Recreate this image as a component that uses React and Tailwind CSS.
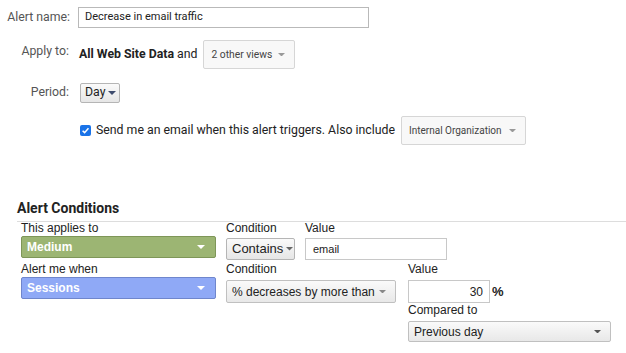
import React from "react";

const Caret = ({ color = "#666", w = 8 }) => (
  <svg width={w} height={w / 2} viewBox="0 0 8 4" className="shrink-0">
    <path d="M0 0h8L4 4z" fill={color} />
  </svg>
);

const arial = { fontFamily: "'Liberation Sans', Arial, sans-serif" };

export default function App() {
  return (
    <div className="w-[626px] h-[353px] bg-white relative overflow-hidden" style={{ fontFamily: "Roboto, 'Liberation Sans', sans-serif" }}>
      {/* Top form */}
      <div className="pt-[7px]">
        <div className="flex items-center h-[21px]">
          <div className="w-[70px] text-right text-[12.3px] text-[#555]">Alert name:</div>
          <div className="ml-[8px] w-[291px] h-[21px] border border-[#b9b9b9] flex items-center px-[6px] text-[11px] text-[#222]">Decrease in email traffic</div>
        </div>
        <div className="flex items-center mt-[12px] h-[29px]">
          <div className="w-[69px] text-right text-[12.3px] text-[#555] self-start mt-[2px]">Apply to:</div>
          <div className="ml-[10px] text-[12.3px] text-[#222]"><span className="font-bold">All Web Site Data</span> and</div>
          <div className="ml-[6px] w-[92px] h-[29px] border border-[#d6d6d6] rounded-[2px] bg-[#f8f8f8] flex items-center justify-between pl-[7px] pr-[9px] text-[10.3px] text-[#444]">
            <span>2 other views</span>
            <Caret color="#999" w={7} />
          </div>
        </div>
        <div className="flex items-center mt-[13px] h-[21px]">
          <div className="w-[69px] text-right text-[12.3px] text-[#555]">Period:</div>
          <div className="ml-[11px] w-[40px] h-[20px] border border-[#b5b5b5] rounded-[2px] bg-gradient-to-b from-[#fafafa] to-[#e6e6e6] flex items-center pl-[4px] gap-[2px] text-[12.3px] text-[#222]">
            <span>Day</span>
            <Caret color="#3e4c6e" />
          </div>
        </div>
        <div className="flex items-center mt-[13px] h-[29px] ml-[80px]">
          <div className="w-[11px] h-[11px] rounded-[2px] bg-[#1a73e8] flex items-center justify-center -mt-[1px]">
            <svg width="9" height="9" viewBox="0 0 10 10"><path d="M1.8 5.2l2.2 2.2 4.3-4.8" stroke="white" strokeWidth="1.7" fill="none" /></svg>
          </div>
          <div className="ml-[5px] text-[12.3px] text-[#222]">Send me an email when this alert triggers. Also include</div>
          <div className="ml-[6px] w-[125px] h-[29px] border border-[#d6d6d6] rounded-[2px] bg-[#f8f8f8] flex items-center justify-between pl-[7px] pr-[9px] text-[10px] text-[#444]">
            <span>Internal Organization</span>
            <Caret color="#999" w={7} />
          </div>
        </div>
      </div>

      {/* Alert conditions */}
      <div className="mt-[55px] ml-[17px]">
        <div className="text-[14px] font-bold text-[#222] leading-[17px]">Alert Conditions</div>
        <div className="mt-[4px] h-px bg-[#ddd]" />
        <div className="ml-[4px] text-[12px] text-[#222] -mt-[1px]" style={arial}>
          <div className="flex">
            <div className="w-[195px]">
              <div className="leading-[14px]">This applies to</div>
              <div className="mt-[1px] h-[22px] rounded-[2px] border border-[#7e9658] bg-[#9cb573] flex items-center justify-between pl-[5px] pr-[10px] text-white font-bold">
                <span>Medium</span><Caret color="#fff" />
              </div>
            </div>
            <div className="ml-[10px]">
              <div className="leading-[14px]">Condition</div>
              <div className="mt-[3px] w-[69px] h-[22px] border border-[#b5b5b5] rounded-[2px] bg-gradient-to-b from-[#fafafa] to-[#e6e6e6] flex items-center pl-[5px] gap-[3px] text-[13px]">
                <span>Contains</span><Caret color="#666" w={7} />
              </div>
            </div>
            <div className="ml-[10px]">
              <div className="leading-[14px]">Value</div>
              <div className="mt-[3px] w-[142px] h-[22px] border border-[#c8c8c8] flex items-center px-[7px] text-[11px]">email</div>
            </div>
          </div>
          <div className="flex">
            <div className="w-[195px]">
              <div className="leading-[14px] mt-[2px]">Alert me when</div>
              <div className="mt-[1px] h-[22px] rounded-[2px] border border-[#6f86cc] bg-[#8fa9f6] flex items-center justify-between pl-[5px] pr-[10px] text-white font-bold">
                <span>Sessions</span><Caret color="#fff" />
              </div>
            </div>
            <div className="ml-[10px]">
              <div className="leading-[14px] mt-[2px]">Condition</div>
              <div className="mt-[4px] w-[170px] h-[23px] border border-[#c0c0c0] rounded-[2px] bg-gradient-to-b from-[#fafafa] to-[#e8e8e8] flex items-center justify-between pl-[5px] pr-[9px]">
                <span>% decreases by more than</span><Caret color="#888" w={7} />
              </div>
            </div>
            <div className="ml-[12px]">
              <div className="leading-[14px] mt-[2px]">Value</div>
              <div className="flex items-center mt-[4px]">
                <div className="w-[82px] h-[23px] border border-[#c8c8c8] flex items-center justify-end px-[6px] text-[12px]">30</div>
                <span className="ml-[2px] text-[13px] font-bold">%</span>
              </div>
              <div className="leading-[14px] mt-[0px]">Compared to</div>
              <div className="mt-[4px] w-[203px] h-[21px] border border-[#c0c0c0] rounded-[2px] bg-gradient-to-b from-[#fafafa] to-[#e8e8e8] flex items-center justify-between pl-[5px] pr-[9px]">
                <span>Previous day</span><Caret color="#555" w={7} />
              </div>
            </div>
          </div>
        </div>
      </div>
    </div>
  );
}
